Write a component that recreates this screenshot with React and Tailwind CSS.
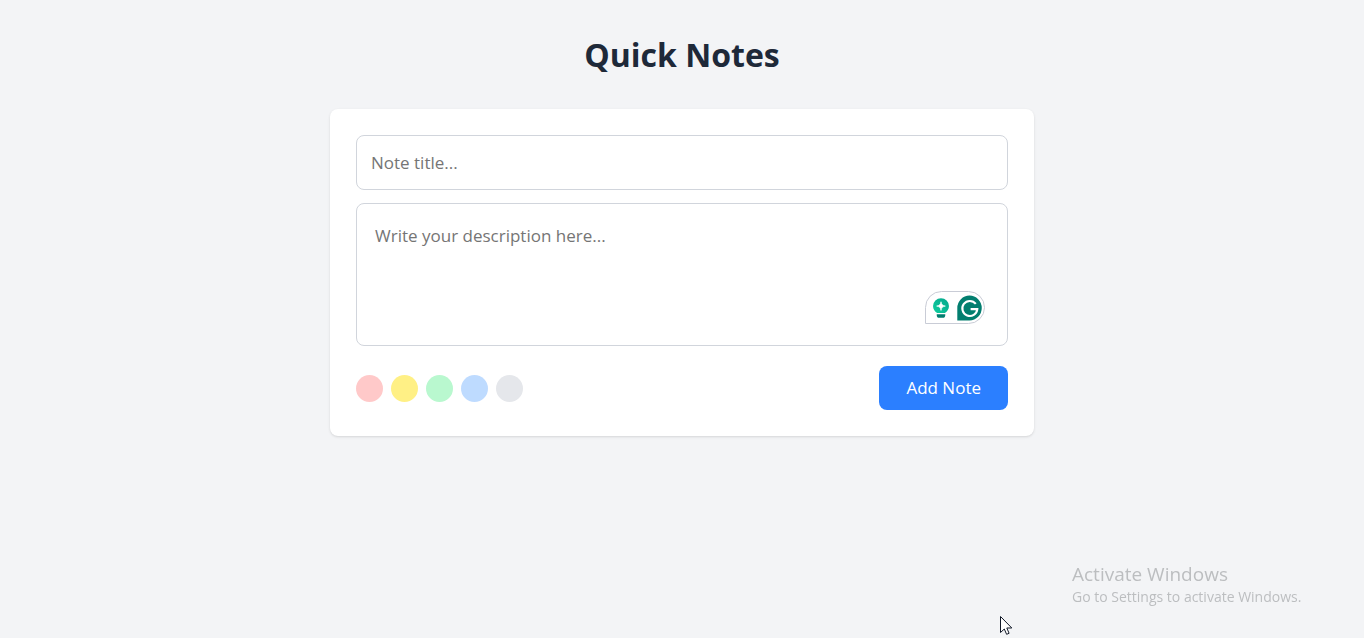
import React, { useState } from "react";

const COLORS = [
  { name: "Red", className: "bg-red-200" },
  { name: "Yellow", className: "bg-yellow-200" },
  { name: "Green", className: "bg-green-200" },
  { name: "Blue", className: "bg-blue-200" },
  { name: "Gray", className: "bg-gray-200" },
];

function WritingAssistant() {
  return (
    <div className="absolute right-[23px] bottom-[22px] flex h-[33px] w-[60px] items-center justify-between rounded-[17px] rounded-bl-none border border-[#c9ccd6] bg-white pr-[2px] pl-[6px]">
      <svg width="18" height="22" viewBox="0 0 19 22" aria-hidden="true">
        <defs>
          <linearGradient id="bulb" x1="0" y1="1" x2="1" y2="0">
            <stop offset="0" stopColor="#0fcf9e" />
            <stop offset="1" stopColor="#05a58c" />
          </linearGradient>
        </defs>
        <path d="M9.5 .6a8.4 8.4 0 0 1 8.4 8.4c0 3.2-1.7 5.7-4.3 7.4H5.4C2.8 14.7 1.100 12.200 1.100 9A8.4 8.4 0 0 1 9.500 .6Z" fill="url(#bulb)" />
        <path d="M9.5 4.400c.6 3 1.600 4 4.600 4.600-3 .6-4 1.600-4.600 4.600-.6-3-1.600-4-4.600-4.600 3-.6 4-1.600 4.600-4.600Z" fill="#fff" stroke="#fff" strokeWidth=".7" />
        <path d="M5 17.700h9v.9a2.700 2.700 0 0 1-2.700 2.700H7.700A2.700 2.700 0 0 1 5 18.600Z" fill="#027e6f" />
      </svg>
      <svg width="25" height="26" viewBox="0 0 25 26" aria-hidden="true">
        <path d="M12.5 .5a12.250 12.500 0 0 1 0 25H.3V13A12.250 12.500 0 0 1 12.500 .5Z" fill="#027e6f" />
        <path d="M18.800 8.900A7.500 7.500 0 1 0 20.300 14.100H13.600" fill="none" stroke="#fff" strokeWidth="2.100" />
      </svg>
    </div>
  );
}

export default function App() {
  const [color, setColor] = useState("Gray");
  return (
    <div className="min-h-screen bg-gray-100 px-4 pt-[35px] font-['Open_Sans','Noto_Sans',sans-serif]">
      <main className="mx-auto max-w-[704px]">
        <h1 className="mb-[34px] text-center text-[32px] leading-[40px] font-bold text-gray-800">Quick Notes</h1>
        <form
          className="rounded-lg bg-white p-[26px] shadow-sm"
          onSubmit={(event) => event.preventDefault()}
        >
          <input
            type="text"
            aria-label="Note title"
            placeholder="Note title..."
            className="block h-[55px] w-full rounded-lg border border-gray-300 px-[14px] text-[17px] text-gray-800 outline-none placeholder:text-[#757575]"
          />
          <div className="relative mt-[13px]">
            <textarea
              aria-label="Note description"
              placeholder="Write your description here..."
              className="block h-[143px] w-full resize-none rounded-lg border border-gray-300 px-[18px] py-[18px] text-[17px] leading-[28px] text-gray-800 outline-none placeholder:text-[#757575]"
            />
            <WritingAssistant />
          </div>
          <div className="mt-[20px] flex items-center justify-between">
            <div className="flex gap-2">
              {COLORS.map((item) => (
                <button
                  key={item.name}
                  type="button"
                  aria-label={item.name}
                  aria-pressed={color === item.name}
                  onClick={() => setColor(item.name)}
                  className={`size-[27px] rounded-full ${item.className}`}
                />
              ))}
            </div>
            <button type="submit" className="h-[44px] rounded-lg bg-[#2b7fff] px-[27px] text-[17px] text-white">
              Add Note
            </button>
          </div>
        </form>
      </main>
      <aside className="fixed right-[56px] bottom-[31px] min-w-[236px] text-[#bcbec0]">
        <p className="text-[19px] leading-[26px]">Activate Windows</p>
        <p className="text-[14px] leading-[20px]">Go to Settings to activate Windows.</p>
      </aside>
      <svg className="pointer-events-none fixed top-[616px] left-[1000px]" width="13" height="20" viewBox="0 0 13 20" aria-hidden="true">
        <path d="M.5 .5v16l3.800-3.500 2.300 5.300 2.500-1-2.300-5.300h5Z" fill="#fff" stroke="#111827" strokeWidth="1" />
      </svg>
    </div>
  );
}
